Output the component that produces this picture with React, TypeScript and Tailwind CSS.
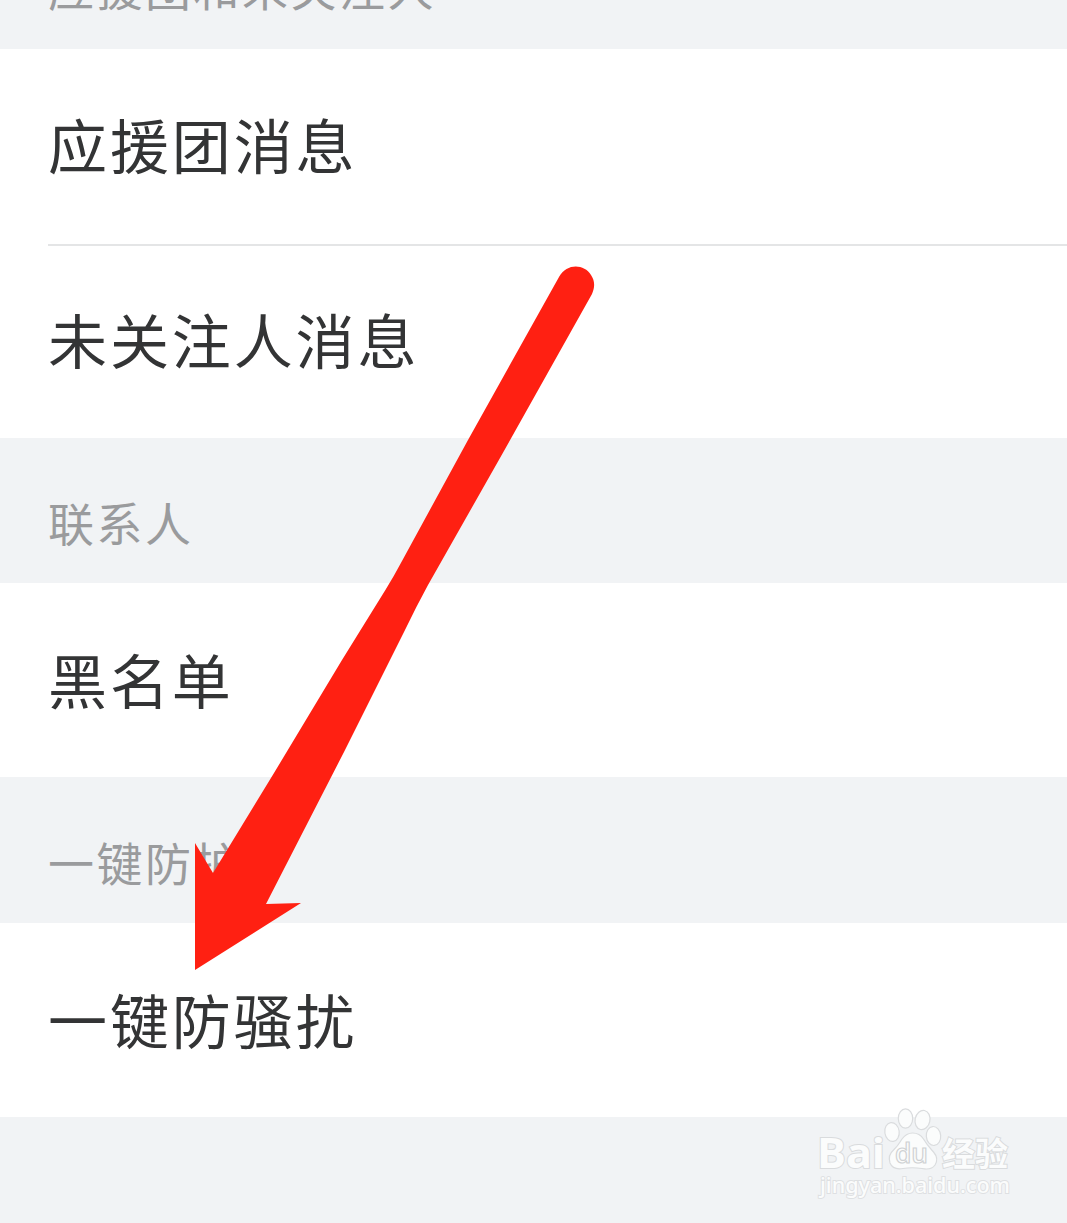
import React from 'react';

const sections = [
    {
        title: '应援团和未关注人',
        headerClass: 'h-[49px] pb-[37px]',
        items: [
            { label: '应援团消息', rowClass: 'h-[197px] pb-1.5 border-b-2 border-[#e4e5e6]' },
            { label: '未关注人消息', rowClass: 'h-[192px] pb-2' },
        ],
    },
    {
        title: '联系人',
        headerClass: 'h-[145px] pb-[36px]',
        items: [{ label: '黑名单', rowClass: 'h-[194px] pb-1' }],
    },
    {
        title: '一键防护',
        headerClass: 'h-[146px] pb-[36px]',
        items: [{ label: '一键防骚扰', rowClass: 'h-[194px] pb-1' }],
    },
];

const Arrow: React.FC = () => (
    <svg className="absolute left-0 top-0 pointer-events-none" width="1067" height="1223" viewBox="0 0 1067 1223" fill="none">
        <path
            d="M559 277 C567 263 584 264 591 275 C595 281 595 287 592 294 L500 458 L428 585 Q416 607 405 630 L344 752 L266 904 L301 903 L195 970 L195 843 L213 873 L274 773 L342 660 L386 589 Q394 576 402 561 L468 440 Z"
            fill="#ff2012"
        />
    </svg>
);

const Watermark: React.FC = () => (
    <svg className="absolute left-[810px] top-[1100px] pointer-events-none" width="210" height="104" viewBox="0 0 210 104">
        <g fill="#fbfcfc" stroke="#dadcde" strokeWidth="1.2">
            <ellipse cx="82" cy="32" rx="7.2" ry="9.5" transform="rotate(-8 82 32)" />
            <ellipse cx="95.5" cy="18.5" rx="7.2" ry="9.7" />
            <ellipse cx="112.5" cy="20" rx="7.4" ry="9.7" transform="rotate(12 112.5 20)" />
            <ellipse cx="123.5" cy="36" rx="7.2" ry="9.5" transform="rotate(-5 123.5 36)" />
            <path d="M102.5 33 C108 33 111 35 113.5 39 C117 45 120 48 123.5 52 C127 56 127.5 61 125 65 C122 69.5 117 69.5 112 68.5 C105 67.5 99 67.5 93 68.5 C87 69.5 82 68 80 63 C78 57 80 53 84 49.5 C88 46 90 42 92 39 C95 35 98 33 102.5 33 Z" />
        </g>
        <g fill="#fbfcfc" stroke="#d9dbdd" strokeWidth="2" paintOrder="stroke">
            <text x="7" y="68" fontSize="42" textLength="68" lengthAdjust="spacingAndGlyphs" fontFamily='"Open Sans", sans-serif' fontWeight="bold">Bai</text>
            <text x="132" y="66" fontSize="33" textLength="66" lengthAdjust="spacingAndGlyphs" fontFamily='"Noto Sans CJK SC", sans-serif' fontWeight="bold">经验</text>
        </g>
        <text x="85" y="63" fontSize="27" textLength="33" lengthAdjust="spacingAndGlyphs" fill="#fbfcfc" stroke="#cfd1d3" strokeWidth="1.2" fontFamily='"Open Sans", sans-serif' fontWeight="600">du</text>
        <text x="10" y="93" fontSize="22" textLength="190" lengthAdjust="spacingAndGlyphs" fill="#fbfcfc" stroke="#dee0e2" strokeWidth="1.9" paintOrder="stroke" fontFamily='"Noto Sans", sans-serif' fontWeight="500">jingyan.baidu.com</text>
    </svg>
);

const App: React.FC = () => {
    return (
        <div className="relative w-[1067px] h-[1223px] overflow-hidden bg-[#f1f3f5] font-['Noto_Sans_CJK_SC',sans-serif]">
            {sections.map((section) => (
                <section key={section.title}>
                    <div className={`flex items-end pl-12 overflow-hidden ${section.headerClass}`}>
                        <h2 className="text-[46px] leading-[52px] tracking-[2.5px] text-[#9a9b9d] whitespace-nowrap">{section.title}</h2>
                    </div>
                    <div className="bg-white pl-12">
                        {section.items.map((item) => (
                            <div key={item.label} className={`flex items-center text-[59px] leading-none tracking-[2.9px] text-[#333435] ${item.rowClass}`}>
                                {item.label}
                            </div>
                        ))}
                    </div>
                </section>
            ))}
            <Arrow />
            <Watermark />
        </div>
    );
};

export default App;
